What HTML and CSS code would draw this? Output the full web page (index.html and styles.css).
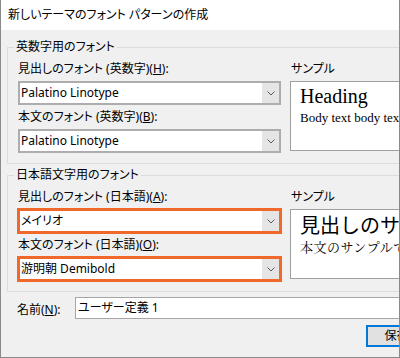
FILE: index.html
```html
<!DOCTYPE html>
<html lang="ja">
<head>
<meta charset="utf-8">
<title>新しいテーマのフォント パターンの作成</title>
<link rel="stylesheet" href="styles.css">
</head>
<body>
<div class="frame">
  <div class="dialog">
    <div class="titlebar">新しいテーマのフォント パターンの作成</div>
    <div class="content">
      <fieldset class="group">
        <legend>英数字用のフォント</legend>
        <div class="group-grid">
          <div class="fields">
            <div class="label">見出しのフォント (英数字)(<u>H</u>):</div>
            <div class="combo">
              <span class="combo-text">Palatino Linotype</span>
              <span class="combo-btn"><svg width="8" height="5" viewBox="0 0 8 5"><polyline points="0.5,0.5 4,4 7.5,0.5" fill="none" stroke="#5a5a5a" stroke-width="1"/></svg></span>
            </div>
            <div class="label">本文のフォント (英数字)(<u>B</u>):</div>
            <div class="combo">
              <span class="combo-text">Palatino Linotype</span>
              <span class="combo-btn"><svg width="8" height="5" viewBox="0 0 8 5"><polyline points="0.5,0.5 4,4 7.5,0.5" fill="none" stroke="#5a5a5a" stroke-width="1"/></svg></span>
            </div>
          </div>
          <div class="sample-col">
            <div class="label">サンプル</div>
            <div class="sample">
              <div class="sample-heading latin">Heading</div>
              <div class="sample-body latin">Body text body text body text. Body text body text.</div>
            </div>
          </div>
        </div>
      </fieldset>

      <fieldset class="group group-second">
        <legend>日本語文字用のフォント</legend>
        <div class="group-grid">
          <div class="fields">
            <div class="label">見出しのフォント (日本語)(<u>A</u>):</div>
            <div class="combo combo-marked">
              <span class="combo-text">メイリオ</span>
              <span class="combo-btn"><svg width="8" height="5" viewBox="0 0 8 5"><polyline points="0.5,0.5 4,4 7.5,0.5" fill="none" stroke="#5a5a5a" stroke-width="1"/></svg></span>
            </div>
            <div class="label">本文のフォント (日本語)(<u>O</u>):</div>
            <div class="combo combo-marked">
              <span class="combo-text">游明朝 Demibold</span>
              <span class="combo-btn"><svg width="8" height="5" viewBox="0 0 8 5"><polyline points="0.5,0.5 4,4 7.5,0.5" fill="none" stroke="#5a5a5a" stroke-width="1"/></svg></span>
            </div>
          </div>
          <div class="sample-col">
            <div class="label">サンプル</div>
            <div class="sample">
              <div class="sample-heading-jp">見出しのサンプルです</div>
              <div class="sample-body-jp">本文のサンプルです。本文のサンプルです。</div>
            </div>
          </div>
        </div>
      </fieldset>

      <div class="name-row">
        <span class="name-label">名前(<u>N</u>):</span>
        <div class="textbox">ユーザー定義 1</div>
      </div>

      <div class="button-row">
        <button class="btn btn-primary">保存(<u>S</u>)</button>
        <button class="btn">キャンセル</button>
      </div>
    </div>
  </div>
</div>
</body>
</html>
```

FILE: styles.css
```css
html, body {
  margin: 0;
  padding: 0;
  background: #f0f0f0;
  overflow: hidden;
}

body {
  font-family: "Noto Sans", "Noto Sans CJK JP", sans-serif;
  font-size: 12px;
  color: #000;
  font-feature-settings: "palt";
}

.frame {
  width: 400px;
  height: 358px;
  box-sizing: border-box;
  border-left: 1px solid #8a8a8a;
  border-right: 1px solid #8a8a8a;
  border-bottom: 1px solid #8a8a8a;
  overflow: hidden;
  background: #f0f0f0;
}

.dialog {
  width: 533px;
  display: flex;
  flex-direction: column;
}

.titlebar {
  height: 30px;
  line-height: 30px;
  background: #fff;
  padding-left: 7px;
  white-space: nowrap;
}

.content {
  padding-top: 10px;
  display: flex;
  flex-direction: column;
}

.group {
  margin: 0 6px;
  padding: 0 10px 10px 10px;
  border: 1px solid #dcdcdc;
  min-width: 0;
}

.group-second {
  margin-top: 4px;
}

.group legend {
  padding: 0 2px;
  margin-left: -4px;
  line-height: 14px;
  font-size: 12px;
  white-space: nowrap;
}

.group-grid {
  padding-top: 7px;
  display: flex;
  gap: 9px;
}

.fields {
  width: 263px;
  flex: none;
  display: flex;
  flex-direction: column;
}

.label {
  line-height: 16px;
  height: 16px;
  margin-bottom: 4px;
  white-space: nowrap;
}

.combo {
  height: 24px;
  box-sizing: border-box;
  border: 2px solid #adadad;
  background: #fff;
  display: flex;
  align-items: stretch;
}

.combo + .label {
  margin-top: 4px;
}

.combo-marked {
  outline: 3px solid #f0692a;
  outline-offset: -2px;
}

.combo-text {
  flex: 1;
  padding-left: 1px;
  line-height: 20px;
  white-space: nowrap;
  overflow: hidden;
}

.combo-btn {
  width: 17px;
  background: #e5e5e5;
  display: flex;
  align-items: center;
  justify-content: center;
}

.sample-col {
  flex: 1;
  min-width: 0;
  display: flex;
  flex-direction: column;
}

.sample-col .label {
  padding-left: 1px;
}

.sample {
  height: 70px;
  box-sizing: border-box;
  border: 1px solid #a0a0a0;
  background: #fff;
  padding: 2px 0 0 9px;
  overflow: hidden;
  white-space: nowrap;
}

.latin {
  font-feature-settings: normal;
}

.sample-heading {
  font-family: "Liberation Serif", serif;
  font-size: 20px;
  line-height: 24px;
}

.sample-body {
  font-family: "Liberation Serif", serif;
  font-size: 13px;
  line-height: 16px;
  margin-top: 2px;
}

.sample-heading-jp {
  font-family: "Noto Sans CJK JP", sans-serif;
  font-size: 20px;
  line-height: 26px;
  font-feature-settings: normal;
}

.sample-body-jp {
  font-family: "Noto Serif CJK JP", "Noto Sans CJK JP", serif;
  font-size: 13px;
  line-height: 16px;
  letter-spacing: 0.5px;
  margin-top: 1px;
  font-feature-settings: normal;
}

.name-row {
  margin-top: 5px;
  padding-left: 16px;
  padding-right: 10px;
  display: flex;
  align-items: center;
}

.name-label {
  width: 58px;
  flex: none;
  padding-top: 2px;
  white-space: nowrap;
}

.textbox {
  flex: 1;
  height: 22px;
  box-sizing: border-box;
  border: 1px solid #a6a6a6;
  background: #fff;
  padding-left: 2px;
  line-height: 20px;
  white-space: nowrap;
}

.button-row {
  margin-top: 6px;
  padding-right: 10px;
  display: flex;
  justify-content: flex-end;
  gap: 8px;
}

.btn {
  width: 75px;
  height: 22px;
  box-sizing: border-box;
  border: 1px solid #adadad;
  background: #e1e1e1;
  font-family: "Noto Sans", "Noto Sans CJK JP", sans-serif;
  font-size: 12px;
  font-feature-settings: "palt";
  color: #000;
  padding: 0;
  line-height: 18px;
}

.btn-primary {
  border: 2px solid #0078d7;
}
```
